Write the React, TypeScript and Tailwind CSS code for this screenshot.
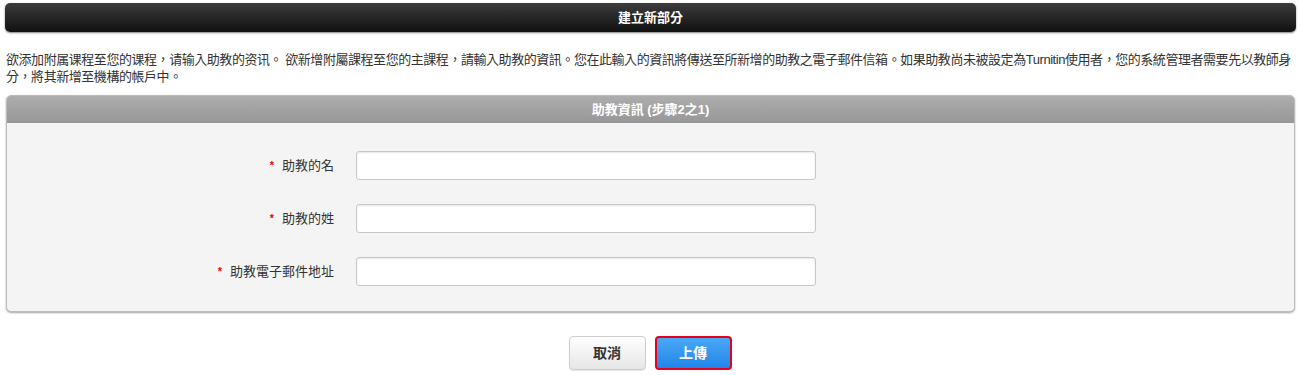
import React from 'react';

const fields = ['助教的名', '助教的姓', '助教電子郵件地址'];

const Field: React.FC<{ label: string }> = ({ label }) => (
  <div className="flex items-center h-[29px]">
    <div className="w-[327px] flex justify-end items-center text-[13px] text-[#333]">
      <span className="text-[#e00] text-[11px] mr-[8px] font-bold">*</span>
      <span>{label}</span>
    </div>
    <input
      type="text"
      className="ml-[22px] w-[460px] h-[29px] bg-white border border-[#c8c8c8] rounded-[3px] shadow-[inset_0_1px_2px_rgba(0,0,0,0.1)] outline-none"
    />
  </div>
);

export default function App() {
  return (
    <div
      className="w-[1301px] h-[375px] bg-white overflow-hidden"
      style={{ fontFamily: '"Liberation Sans", "Noto Sans CJK TC", sans-serif' }}
    >
      <div className="pt-[3px] px-[5px]">
        <div className="h-[29px] rounded-[5px] bg-gradient-to-b from-[#3c3c3c] to-[#111] shadow-[0_1px_2px_rgba(0,0,0,0.5)] flex items-center justify-center text-white text-[13px] font-bold">
          建立新部分
        </div>
      </div>

      <p className="mt-[19px] px-[6px] text-[13px] leading-[17px] text-[#333] tracking-[-0.45px]">
        欲添加附属课程至您的课程，请输入助教的资讯。 欲新增附屬課程至您的主課程，請輸入助教的資訊。您在此輸入的資訊將傳送至所新增的助教之電子郵件信箱。如果助教尚未被設定為Turnitin使用者，您的系統管理者需要先以教師身分，將其新增至機構的帳戶中。
      </p>

      <div className="mt-[10px] mx-[6px] rounded-[5px] border border-[#bbb] bg-[#f4f4f4] shadow-[0_1px_2px_rgba(0,0,0,0.35)] overflow-hidden">
        <div className="h-[27px] bg-gradient-to-b from-[#adadad] to-[#979797] flex items-center justify-center text-white text-[13px] font-bold">
          助教資訊 (步驟2之1)
        </div>
        <div className="pt-[28px] pb-[25px] flex flex-col gap-[24px]">
          {fields.map((f) => (
            <Field key={f} label={f} />
          ))}
        </div>
      </div>

      <div className="mt-[24px] flex justify-center gap-[9px] pr-[1px]">
        <button className="w-[77px] h-[34px] rounded-[4px] border border-[#ccc] bg-gradient-to-b from-white to-[#e6e6e6] text-[#333] text-[14px] font-bold shadow-[0_1px_1px_rgba(0,0,0,0.1)]">
          取消
        </button>
        <button className="w-[77px] h-[34px] rounded-[4px] border-2 border-[#e8001c] bg-gradient-to-b from-[#4aa8f5] to-[#1f86ea] text-white text-[14px] font-bold">
          上傳
        </button>
      </div>
    </div>
  );
}
